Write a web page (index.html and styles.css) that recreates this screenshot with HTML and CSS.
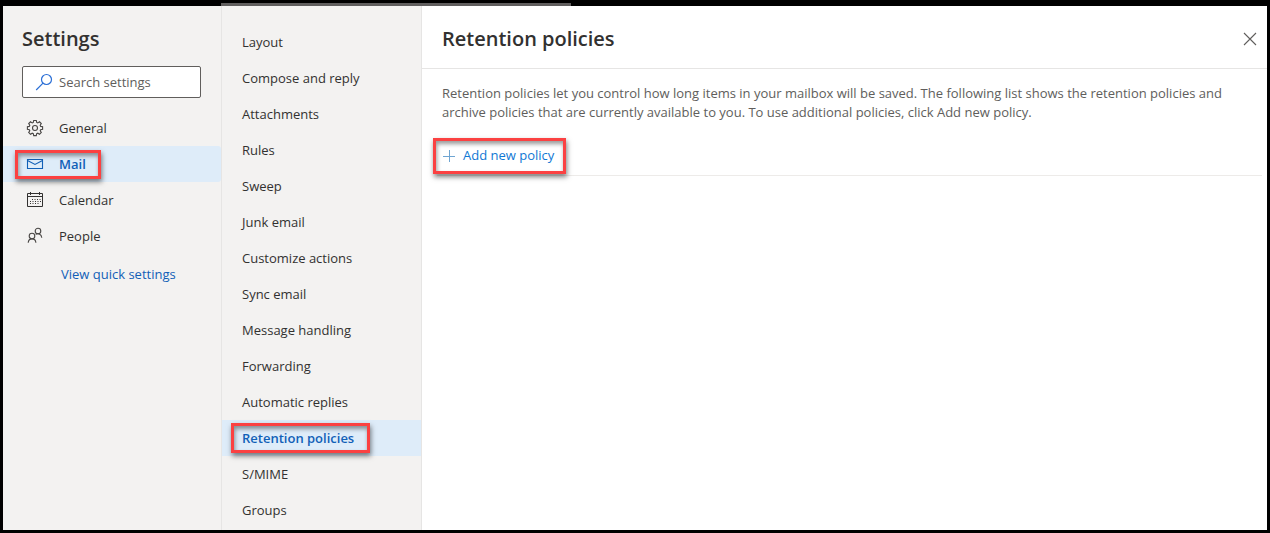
FILE: index.html
```html
<!DOCTYPE html>
<html lang="en">
<head>
<meta charset="utf-8">
<title>Settings</title>
<link rel="stylesheet" href="styles.css">
</head>
<body>
<div class="dialog">
  <div class="top-strip"></div>
  <aside class="sidebar">
    <h1 class="title">Settings</h1>
    <label class="search">
      <svg width="18" height="18" viewBox="0 0 18 18" fill="none" stroke="#2b6fd6" stroke-width="1.2"><circle cx="11.5" cy="6.5" r="5"/><path d="M8 10.2 1.2 17"/></svg>
      <input class="search-input" type="search" placeholder="Search settings" aria-label="Search settings">
    </label>
    <nav class="categories" aria-label="Categories">
      <a class="category" href="#general">
        <svg width="18" height="18" viewBox="0 0 18 18" fill="none" stroke="#484644" stroke-width="1.1"><path d="M7.7 1.5h2.6l.4 1.9 1.1.5 1.7-1.1 1.8 1.8-1.1 1.7.5 1.1 1.9.4v2.5l-1.9.4-.5 1.1 1.1 1.7-1.8 1.8-1.7-1.1-1.1.5-.4 1.9H7.7l-.4-1.9-1.1-.5-1.7 1.1-1.8-1.8 1.1-1.7-.5-1.1-1.9-.4V7.8l1.9-.4.5-1.1-1.1-1.7 1.8-1.8 1.7 1.1 1.1-.5z"/><circle cx="9" cy="9" r="2.5"/></svg>
        <span>General</span>
      </a>
      <a class="category selected" href="#mail" aria-current="true">
        <svg width="18" height="18" viewBox="0 0 18 18" fill="none" stroke="#1160b7" stroke-width="1.1"><path d="M1.5 4.5h15v9h-15zM1.5 5.5 9 9.5l7.5-4"/></svg>
        <span>Mail</span>
        <i class="marker marker-mail"></i>
      </a>
      <a class="category" href="#calendar">
        <svg width="18" height="18" viewBox="0 0 18 18" fill="none" stroke="#323130" stroke-width="1"><path d="M1.5 2.5h15v13h-15zM1.5 5.5h15M4.5 1v3M13.5 1v3"/><path d="M6 8.5h9M4 10.5h11M4 12.5h9" stroke-dasharray="1 1.5"/></svg>
        <span>Calendar</span>
      </a>
      <a class="category" href="#people">
        <svg width="18" height="18" viewBox="0 0 18 18" fill="none" stroke="#484644" stroke-width="1.1"><circle cx="12" cy="4" r="2.8"/><path d="M9.6 7.4c2-1.4 5.8-.6 6.2 3.4"/><circle cx="6" cy="9" r="2.8"/><path d="M2.2 15.8c.4-5.3 7.3-5.3 7.7 0"/></svg>
        <span>People</span>
      </a>
    </nav>
    <a class="quick" href="#quick">View quick settings</a>
  </aside>
  <nav class="sections" aria-label="Mail settings">
    <a class="section" href="#layout">Layout</a>
    <a class="section" href="#compose">Compose and reply</a>
    <a class="section" href="#attachments">Attachments</a>
    <a class="section" href="#rules">Rules</a>
    <a class="section" href="#sweep">Sweep</a>
    <a class="section" href="#junk">Junk email</a>
    <a class="section" href="#actions">Customize actions</a>
    <a class="section" href="#sync">Sync email</a>
    <a class="section" href="#handling">Message handling</a>
    <a class="section" href="#forwarding">Forwarding</a>
    <a class="section" href="#replies">Automatic replies</a>
    <a class="section selected" href="#retention" aria-current="page">Retention policies<i class="marker marker-retention"></i></a>
    <a class="section" href="#smime">S/MIME</a>
    <a class="section" href="#groups">Groups</a>
  </nav>
  <main class="content">
    <header class="content-header">
      <h2 class="title">Retention policies</h2>
      <button class="close" type="button" aria-label="Close"><svg width="14" height="14" viewBox="0 0 14 14" fill="none" stroke="#605e5c" stroke-width="1.1"><path d="m1 1 12 12M13 1 1 13"/></svg></button>
    </header>
    <p class="intro">Retention policies let you control how long items in your mailbox will be saved. The following list shows the retention policies and archive policies that are currently available to you. To use additional policies, click Add new policy.</p>
    <div class="toolbar">
      <button class="add" type="button"><svg width="14" height="14" viewBox="0 0 14 14" fill="none" stroke="#6fa5d2" stroke-width="1"><path d="M1 7.5h12M7.5 1v12"/></svg>Add new policy<i class="marker marker-add"></i></button>
    </div>
  </main>
</div>
</body>
</html>
```
FILE: styles.css
```css
* { box-sizing: border-box; }

body {
  margin: 0;
  padding: 6px 3px 3px;
  min-height: 100vh;
  display: flex;
  background: #000;
  color: #323130;
  font: 13px/19px "Segoe UI", "Open Sans", sans-serif;
}

a { color: inherit; text-decoration: none; }
svg { display: block; flex: none; }
button { border: 0; padding: 0; background: none; font: inherit; }

.dialog {
  position: relative;
  flex: 1;
  display: grid;
  grid-template-columns: 219px 200px 1fr;
  background: #fff;
}

.top-strip {
  position: absolute;
  top: -3px;
  left: 218px;
  width: 350px;
  height: 3px;
  background: #605e5e;
}

.title {
  margin: 0;
  font-size: 20px;
  line-height: 28px;
  font-weight: 600;
}

.sidebar {
  padding-top: 19px;
  background: #f3f2f1;
  border-right: 1px solid #e6e5e4;
}
.sidebar .title { padding-left: 19px; }

.search {
  display: flex;
  align-items: center;
  gap: 6px;
  height: 32px;
  margin: 13px 20px 12px 19px;
  padding-left: 12px;
  background: #fff;
  border: 1px solid #605e5c;
  border-radius: 2px;
}
.search-input {
  flex: 1;
  min-width: 0;
  padding: 0;
  border: 0;
  outline: 0;
  background: none;
  font: inherit;
}
.search-input::placeholder { color: #605e5c; opacity: 1; }

.category {
  position: relative;
  display: flex;
  align-items: center;
  gap: 15px;
  height: 36px;
  padding-left: 23px;
}
.selected { background: #deecf9; color: #1160b7; font-weight: 600; }
.category.selected { border-radius: 0 3px 3px 0; }

.quick {
  display: block;
  padding: 11px 0 0 58px;
  color: #1160b7;
}

.sections {
  padding-top: 18px;
  background: #f3f2f1;
  border-right: 1px solid #e6e5e4;
}
.section {
  position: relative;
  display: flex;
  align-items: center;
  height: 36px;
  padding-left: 20px;
}

.marker {
  position: absolute;
  border: 3px solid #fb4142;
  box-shadow: 1px 3px 5px rgba(0, 0, 0, .5), inset 1px 3px 4px rgba(0, 0, 0, .4);
  pointer-events: none;
}
.marker-mail { left: 12px; top: 4px; width: 86px; height: 29px; }
.marker-retention { left: 9px; top: 3px; width: 139px; height: 30px; }
.marker-add { left: -9px; right: -12px; top: -8px; bottom: -9px; }

.content-header {
  display: flex;
  align-items: center;
  justify-content: space-between;
  height: 63px;
  padding: 4px 10px 0 20px;
  border-bottom: 1px solid #e6e5e4;
}

.intro {
  margin: 15px 20px 0;
  color: #605e5c;
}

.toolbar {
  margin: 24px 5px 0 15px;
  padding: 0 0 10px 5px;
  border-bottom: 1px solid #edebe9;
}
.add {
  position: relative;
  display: flex;
  align-items: center;
  gap: 7px;
  color: #0f78d4;
}
```
